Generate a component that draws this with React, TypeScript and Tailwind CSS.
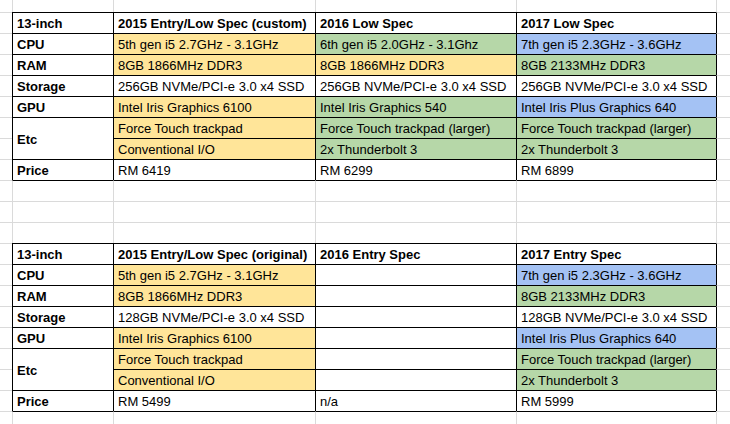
import React from 'react';

type Tone = 'y' | 'g' | 'b' | 'w';
type Spec = { text?: string; tone?: Tone };

interface SpecTable {
  headers: string[];
  rows: { label: string; cells: Spec[] }[];
  price: string[];
}

const toneClass: Record<Tone, string> = {
  y: 'bg-[#ffe599]',
  g: 'bg-[#b6d7a8]',
  b: 'bg-[#a4c2f4]',
  w: 'bg-white',
};

const lowSpec: SpecTable = {
  headers: ['13-inch', '2015 Entry/Low Spec (custom)', '2016 Low Spec', '2017 Low Spec'],
  rows: [
    { label: 'CPU', cells: [{ text: '5th gen i5 2.7GHz - 3.1GHz', tone: 'y' }, { text: '6th gen i5 2.0GHz - 3.1Ghz', tone: 'g' }, { text: '7th gen i5 2.3GHz - 3.6GHz', tone: 'b' }] },
    { label: 'RAM', cells: [{ text: '8GB 1866MHz DDR3', tone: 'y' }, { text: '8GB 1866MHz DDR3', tone: 'y' }, { text: '8GB 2133MHz DDR3', tone: 'g' }] },
    { label: 'Storage', cells: [{ text: '256GB NVMe/PCI-e 3.0 x4 SSD' }, { text: '256GB NVMe/PCI-e 3.0 x4 SSD' }, { text: '256GB NVMe/PCI-e 3.0 x4 SSD' }] },
    { label: 'GPU', cells: [{ text: 'Intel Iris Graphics 6100', tone: 'y' }, { text: 'Intel Iris Graphics 540', tone: 'g' }, { text: 'Intel Iris Plus Graphics 640', tone: 'b' }] },
    { label: 'Etc', cells: [{ text: 'Force Touch trackpad', tone: 'y' }, { text: 'Force Touch trackpad (larger)', tone: 'g' }, { text: 'Force Touch trackpad (larger)', tone: 'g' }] },
    { label: '', cells: [{ text: 'Conventional I/O', tone: 'y' }, { text: '2x Thunderbolt 3', tone: 'g' }, { text: '2x Thunderbolt 3', tone: 'g' }] },
  ],
  price: ['RM 6419', 'RM 6299', 'RM 6899'],
};

const entrySpec: SpecTable = {
  headers: ['13-inch', '2015 Entry/Low Spec (original)', '2016 Entry Spec', '2017 Entry Spec'],
  rows: [
    { label: 'CPU', cells: [{ text: '5th gen i5 2.7GHz - 3.1GHz', tone: 'y' }, {}, { text: '7th gen i5 2.3GHz - 3.6GHz', tone: 'b' }] },
    { label: 'RAM', cells: [{ text: '8GB 1866MHz DDR3', tone: 'y' }, {}, { text: '8GB 2133MHz DDR3', tone: 'g' }] },
    { label: 'Storage', cells: [{ text: '128GB NVMe/PCI-e 3.0 x4 SSD' }, {}, { text: '128GB NVMe/PCI-e 3.0 x4 SSD' }] },
    { label: 'GPU', cells: [{ text: 'Intel Iris Graphics 6100', tone: 'y' }, {}, { text: 'Intel Iris Plus Graphics 640', tone: 'b' }] },
    { label: 'Etc', cells: [{ text: 'Force Touch trackpad', tone: 'y' }, {}, { text: 'Force Touch trackpad (larger)', tone: 'g' }] },
    { label: '', cells: [{ text: 'Conventional I/O', tone: 'y' }, {}, { text: '2x Thunderbolt 3', tone: 'g' }] },
  ],
  price: ['RM 5499', 'n/a', 'RM 5999'],
};

interface CellProps {
  text?: string;
  tone?: Tone;
  bold?: boolean;
  top?: boolean;
  left?: boolean;
  span?: boolean;
}

function Cell({ text, tone = 'w', bold, top, left, span }: CellProps) {
  return (
    <div
      className={[
        'flex items-center overflow-hidden whitespace-nowrap border-t border-l pl-[4px] pt-[1px] text-[13px] leading-[19px] text-black',
        top ? 'border-t-black' : 'border-t-[#dadada]',
        left ? 'border-l-black' : 'border-l-[#dadada]',
        toneClass[tone],
        bold ? 'font-bold' : '',
        span ? 'row-span-2' : '',
      ].join(' ')}
    >
      {text}
    </div>
  );
}

// one gutter + 4 table columns + the cell past the right edge
function BlankRow({ topBlack }: { topBlack?: boolean }) {
  return (
    <>
      <div className="border-t border-t-[#dadada]" />
      <Cell top={topBlack} />
      <Cell top={topBlack} />
      <Cell top={topBlack} />
      <Cell top={topBlack} />
      <Cell />
    </>
  );
}

function TableRows({ data }: { data: SpecTable }) {
  return (
    <>
      <div className="border-t border-t-[#dadada]" />
      {data.headers.map((h) => (
        <Cell key={h} text={h} bold top left />
      ))}
      <Cell left />

      {data.rows.map((row, i) => (
        <React.Fragment key={i}>
          <div className="border-t border-t-[#dadada]" />
          {row.label === 'Etc' && <Cell text="Etc" bold top left span />}
          {row.label !== 'Etc' && row.label !== '' && <Cell text={row.label} bold top left />}
          {row.cells.map((c, j) => (
            <Cell key={j} text={c.text} tone={c.tone} top left />
          ))}
          <Cell left />
        </React.Fragment>
      ))}

      <div className="border-t border-t-[#dadada]" />
      <Cell text="Price" bold top left />
      {data.price.map((p, j) => (
        <Cell key={j} text={p} top left />
      ))}
      <Cell left />
    </>
  );
}

export default function App() {
  return (
    <div className="h-[424px] w-[730px] overflow-hidden bg-white font-['Liberation_Sans',Arial,sans-serif]">
      <div className="grid grid-cols-[12px_101px_202px_201px_200px_1fr] grid-rows-[12px_repeat(20,21px)]">
        {/* strip above the first row line */}
        <div />
        <div className="border-l border-l-[#dadada]" />
        <div className="border-l border-l-[#dadada]" />
        <div className="border-l border-l-[#dadada]" />
        <div className="border-l border-l-[#dadada]" />
        <div className="border-l border-l-[#dadada]" />

        <TableRows data={lowSpec} />
        <BlankRow topBlack />
        <BlankRow />
        <BlankRow />
        <TableRows data={entrySpec} />
        <BlankRow topBlack />
      </div>
    </div>
  );
}
